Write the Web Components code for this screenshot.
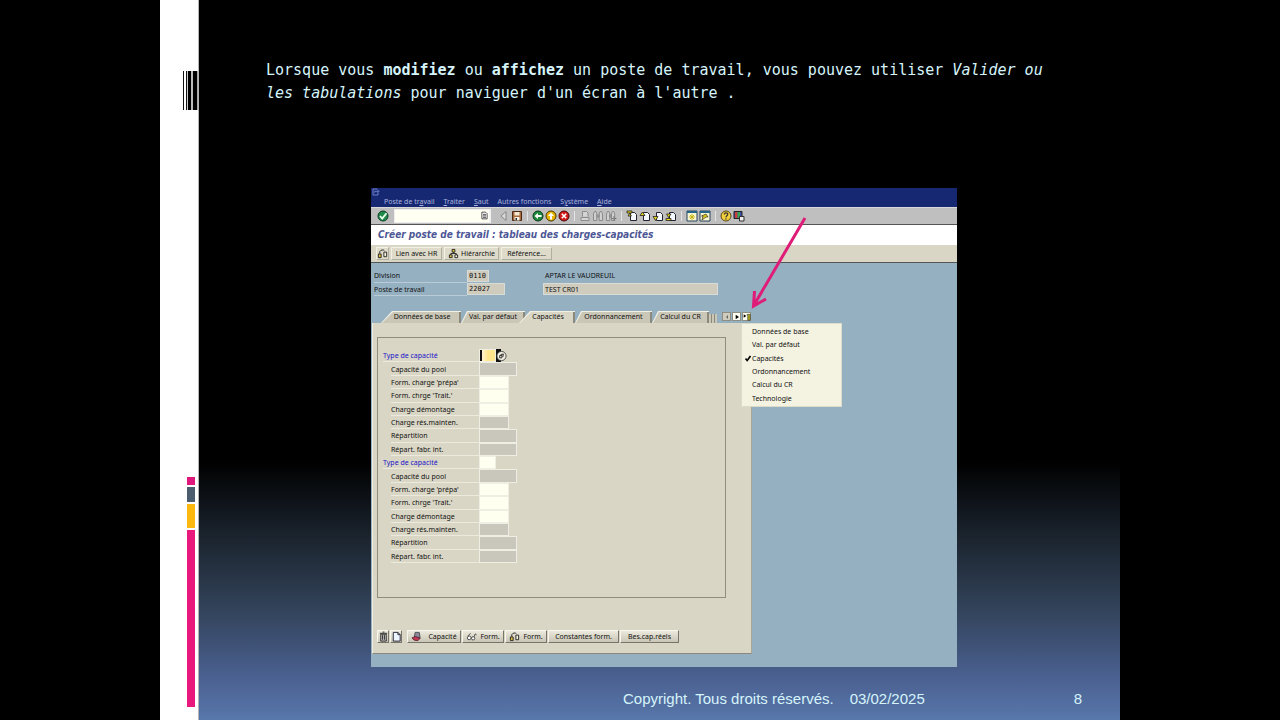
<!DOCTYPE html>
<html lang="fr">
<head>
<meta charset="utf-8">
<title>Poste de travail – navigation</title>
<style>
  html { background: #000; }
  body { margin: 0; min-height: 100vh; display: flex; justify-content: center; background: #000; }
</style>
</head>
<body>
<training-slide>
  <slide-title slot="title"></slide-title>
  <work-center></work-center>
  <span slot="notice">Copyright. Tous droits réservés.</span>
  <time slot="date" datetime="2025-02-03">03/02/2025</time>
  <span slot="page">8</span>
</training-slide>

<script>
const RESET = `
  *, *::before, *::after { box-sizing: border-box; }
  button, input { font: inherit; color: inherit; margin: 0; padding: 0; border: 0; border-radius: 0; outline: 0; background: none; }
  svg { display: block; }
`;

function define(name, css, markup) {
  customElements.define(name, class extends HTMLElement {
    constructor() {
      super();
      const html = typeof markup === 'function' ? markup(this) : markup;
      this.attachShadow({ mode: 'open' }).innerHTML = `<style>${RESET}${css}</style>${html}`;
    }
  });
}

/* Icon drawings on a 12 x 12 grid */
const disc = (fill, edge, mark) => `<circle cx="6" cy="6" r="5" fill="${fill}" stroke="${edge}"/>${mark}`;
const sheet = `<path d="M4.500 2.500h4l2 2v6h-6z" fill="#f4f8ff" stroke="#223"/>`;
const ICONS = {
  check: disc('#1f8a4a', '#0d3d22', '<path d="M3 6l2.200 2.600L9.500 3.200" fill="none" stroke="#e8fff0" stroke-width="1.800"/>'),
  prev: '<path d="M8 1.500v9L3 6z" fill="#d8d8d8" stroke="#777" stroke-width=".8"/>',
  save: '<path d="M1.500 1.500h9v9h-9z" fill="#a86a3c" stroke="#4a2a18"/><path d="M3.500 2h5v3.500h-5z" fill="#f4e6cf"/><path d="M3.500 7h5v3.500h-5z" fill="#f7f2e2"/><path d="M4.500 8h1.500v2.500H4.500z" fill="#333"/>',
  back: disc('#1d8b3c', '#0a3516', '<path d="M2.500 6L6 3v2h3.500v2H6v2z" fill="#fff"/>'),
  exit: disc('#e8b400', '#4a3600', '<path d="M6 2.500L9 6H7v3.500H5V6H3z" fill="#fff"/>'),
  cancel: disc('#d11a1a', '#4d0606', '<path d="M3.800 3.800l4.400 4.400M8.200 3.800L3.800 8.200" stroke="#fff" stroke-width="1.600"/>'),
  print: '<path d="M3.500 6.500v-5h4l1.500 1.500v3.500M2 7.500h8v3H2z" fill="#d4d4d4" stroke="#8c8c8c"/>',
  find: '<path d="M1.500 10.500V4l1-2.500H4l.8 2.500v6.500zM7.200 10.500V4L8 1.500h1.500l1 2.500v6.500zM5 5h2v2H5z" fill="#d0d0d0" stroke="#858585" stroke-width=".9"/>',
  findNext: '<path d="M1.500 10.500V4l1-2.500H4l.8 2.500v6.500zM6.500 10.500V4l.8-2.500h1.400l1 2.500v6.500zM4.500 5H6v2H4.500z" fill="#d0d0d0" stroke="#858585" stroke-width=".9"/><path d="M9 6v5M6.500 8.500h5" stroke="#777"/>',
  first: sheet + '<path d="M1 1h5v2H1zM2 6l1.500-2.500L5.500 6z" fill="#e9d51c" stroke="#222" stroke-width=".8"/>',
  up: sheet + '<path d="M1 5.500L3.500 2 6 5.500z" fill="#e9d51c" stroke="#222" stroke-width=".8"/>',
  down: sheet + '<path d="M1 6.500h5L3.500 10.500z" fill="#e9d51c" stroke="#222" stroke-width=".8"/>',
  last: sheet + '<path d="M1.500 4h4.500L3.500 7.500zM1 8.500h5v2H1z" fill="#e9d51c" stroke="#222" stroke-width=".8"/>',
  session: '<path d="M1 1h10v10H1z" fill="#f8f6d0" stroke="#26415e"/><path d="M1 1h10v2H1z" fill="#26658a"/><path d="M6 4v6M3 7h6M4 5l4 4M8 5l-4 4" stroke="#c0b010" stroke-width=".9"/>',
  shortcut: '<path d="M1 1h10v10H1z" fill="#f8f6d0" stroke="#26415e"/><path d="M1 1h10v2H1z" fill="#26658a"/><path d="M3 10l1-4h-1.500L7 4l2 3-2 0z" fill="#d8c916" stroke="#333" stroke-width=".7"/>',
  help: disc('#f2cf3c', '#5a4610', '<path d="M4.300 4.500c0-2.200 3.600-2 3.400 0C7.600 5.800 6 5.700 6 7.200M6 8.200v1.400" fill="none" stroke="#333" stroke-width="1.300"/>'),
  layout: '<path d="M1 1.500h8v7H1z" fill="#3a4fa8" stroke="#222"/><path d="M2 2h2.500v6H2z" fill="#d23b3b"/><path d="M4.500 2H7v6H4.500z" fill="#3ba352"/><path d="M6.500 6.500h4.500v4.500H6.500z" fill="#eee" stroke="#333"/>',
  exit2: '<path d="M8 1.500H1.500v9H9v-3M4 7V5h6M8 2.500L10.500 5 8 7.500" fill="none" stroke="#7c8bd0" stroke-width="1.300"/>',
  relation: '<path d="M3 6V4c1-2 4-2.500 5-1" fill="none" stroke="#222"/><path d="M1.500 6.500h3v4h-3z" fill="#e3c03a" stroke="#222"/><path d="M7.500 4.500h3v5h-3z" fill="#f5f2dc" stroke="#222"/>',
  tree: '<path d="M4.500 1.500h3v3h-3z" fill="#e3c03a" stroke="#222"/><path d="M6 4.500V6M3 8V6h6v2" fill="none" stroke="#222"/><path d="M1.500 7.500h3v3h-3z" fill="#e3c03a" stroke="#222"/><path d="M7.500 7.500h3v3h-3z" fill="#f5f2dc" stroke="#222"/>',
  trash: '<path d="M3 3.500h6v7.500H3z" fill="#c8c8c8" stroke="#222"/><path d="M2 2.500h8M5 1.200h2M5 4.500v5M7 4.500v5" stroke="#222"/>',
  page: '<path d="M2.500 1.500h5l2.500 2.500v7H2.500z" fill="#eef6ff" stroke="#223"/><path d="M7.500 1.500V4H10" fill="none" stroke="#223"/>',
  hat: '<path d="M3.500 7l1-5.500h4.500l1 6z" fill="#8b8a9c" stroke="#333" stroke-width=".8"/><path d="M1 7.500l4-1.500 5 2-2.500 2.500-4-.5z" fill="#c03a54" stroke="#4a1420" stroke-width=".8"/>',
  glasses: '<circle cx="3.500" cy="7.500" r="2" fill="#fff" stroke="#333" stroke-width=".9"/><circle cx="7.800" cy="8" r="1.800" fill="#fff" stroke="#333" stroke-width=".9"/><path d="M2 5.500L5 2.500M9 6.200l1-3 1.500 1" fill="none" stroke="#333" stroke-width=".9"/>',
  list: '<path d="M2.500 1.500h5l2 2v7h-7z" fill="#fff" stroke="#222"/><path d="M4 4.500h4M4 6.500h4M4 8.500h4" stroke="#222"/>',
  match: '<circle cx="6" cy="6" r="5" fill="#f1efe2" stroke="#444"/><path d="M5 4.500L8 3.800 7.500 7M4 5.500v2.500h2.500V5.500z" fill="none" stroke="#222"/>',
  arrowL: '<path d="M7.500 3v6L4.500 6z" fill="#666"/>',
  arrowR: '<path d="M4 2.500v7L9 6z" fill="#000"/>',
  tabList: '<path d="M1 2l4 2.500L1 7z" fill="#000"/><path d="M6 2h5v9H7V5z" fill="#a8a020" stroke="#333" stroke-width=".8"/>'
};

define('sap-icon',
  `:host { display: block; flex: none; width: 12px; height: 12px; } svg { width: 100%; height: 100%; }`,
  el => `<svg viewBox="0 0 12 12" aria-hidden="true">${ICONS[el.getAttribute('name')]}</svg>`);

/* Bare toolbar icon */
define('tool-button',
  `:host { display: block; flex: none; width: 13px; height: 13px; }
   button { display: grid; place-items: center; width: 100%; height: 100%; }`,
  el => `<button aria-label="${el.getAttribute('label')}"><sap-icon name="${el.getAttribute('icon')}"></sap-icon></button>`);

/* Raised button with optional icon */
define('sap-button',
  `:host { display: block; flex: none; }
   button { display: flex; align-items: center; justify-content: center; gap: var(--button-gap, 2px); width: 100%; height: 13px; line-height: 11px;
     white-space: nowrap; color: #111; border: 1px solid; border-color: #f3f2e6 #b0ae9f #b0ae9f #f3f2e6; background: #dedbcb; }
   :host([raised]) button { border-color: #f8f7ee #77756a #77756a #f8f7ee; background: linear-gradient(#ebe9dc, #c9c6b6); }
   sap-icon { width: 11px; height: 11px; }`,
  el => `<button${el.hasAttribute('label') ? ` aria-label="${el.getAttribute('label')}"` : ''}>${
    el.hasAttribute('icon') ? `<sap-icon name="${el.getAttribute('icon')}"></sap-icon>` : ''}<slot></slot></button>`);

define('sap-menu',
  `:host { display: block; height: 19px; background: #172873; color: #a9b3dc; }
   sap-icon { width: 10px; height: 8px; }
   nav { display: flex; gap: 9px; padding-left: 13px; line-height: 11px; }
   a { color: inherit; text-decoration: none; white-space: nowrap; }`,
  `<sap-icon name="exit2"></sap-icon>
   <nav><a href="#">Poste de tr<u>a</u>vail</a><a href="#"><u>T</u>raiter</a><a href="#"><u>S</u>aut</a><a href="#">Autres fonctions</a><a href="#">S<u>y</u>stème</a><a href="#"><u>A</u>ide</a></nav>`);

define('sap-toolbar',
  `:host { display: flex; align-items: center; height: 18px; padding: 0 0 1px 5px; background: #c0bfc0; border-bottom: 1px solid #555; border-top: 1px solid #d8d8d8; }
   .command { display: flex; align-items: center; width: 97px; height: 14px; margin: 0 6px 0 5px; background: #fffff2; border: 1px solid #eee; border-right: 2px solid #f2f2f2; }
   .command input { flex: 1; min-width: 0; height: 100%; }
   .command sap-icon { width: 9px; height: 9px; }
   .rule { flex: none; width: 8px; height: 10px; background: linear-gradient(90deg, transparent 4px, #e4e4e4 4px, #e4e4e4 5px, transparent 5px); }`,
  `<tool-button icon="check" label="Valider"></tool-button>
   <div class="command"><input aria-label="Commande"><sap-icon name="list"></sap-icon></div>
   <tool-button icon="prev" label="Replier"></tool-button><tool-button icon="save" label="Sauvegarder"></tool-button><i class="rule"></i>
   <tool-button icon="back" label="Retour"></tool-button><tool-button icon="exit" label="Terminer"></tool-button><tool-button icon="cancel" label="Interrompre"></tool-button><i class="rule"></i>
   <tool-button icon="print" label="Imprimer"></tool-button><tool-button icon="find" label="Rechercher"></tool-button><tool-button icon="findNext" label="Poursuivre la recherche"></tool-button><i class="rule"></i>
   <tool-button icon="first" label="Première page"></tool-button><tool-button icon="up" label="Page précédente"></tool-button><tool-button icon="down" label="Page suivante"></tool-button><tool-button icon="last" label="Dernière page"></tool-button><i class="rule"></i>
   <tool-button icon="session" label="Nouveau mode"></tool-button><tool-button icon="shortcut" label="Créer un raccourci"></tool-button><i class="rule"></i>
   <tool-button icon="help" label="Aide"></tool-button><tool-button icon="layout" label="Présentation"></tool-button>`);

/* Label with its entry field: head, wide, closed, tiny and focus variants */
define('sap-field',
  `:host { display: grid; grid-template-columns: 88px 1fr; padding-left: 8px; min-height: 0; }
   :host([head]) { grid-template-columns: 96px 1fr; padding-left: 0; }
   label { display: flex; align-items: center; padding-top: 1px; border-bottom: 1px solid #eceadd; line-height: 11px; white-space: nowrap; }
   :host([head]) label { color: #1a12c8; }
   .entry { display: flex; align-items: stretch; }
   input { width: 30px; height: 100%; border: 1px solid #efeee2; background: #fffff0; }
   :host([wide]) input { width: 38px; }
   :host([closed]) input { background: #c9c6bb; }
   :host([tiny]) input { width: 17px; }
   :host([focus]) input { background: linear-gradient(90deg, #111 2px, #fff3d0 2px, #ffe68c 8px); }
   .match { display: grid; place-items: center; width: 11px; background: linear-gradient(90deg, #111 5px, transparent 5px); }
   .match sap-icon { width: 11px; height: 12px; }`,
  el => `<label for="f">${el.getAttribute('label')}</label><div class="entry"><input id="f"${el.hasAttribute('closed') ? ' readonly' : ''}>${
    el.hasAttribute('focus') ? '<button class="match" aria-label="Aide à la saisie"><sap-icon name="match"></sap-icon></button>' : ''}</div>`);

define('sap-header',
  `:host { display: grid; grid-template-columns: 93px 76px 1fr; grid-auto-rows: 1fr; height: 27px; padding-left: 2px; margin-right: 239px; line-height: 11px; }
   label { border-bottom: 1px solid #b9cbd6; display: flex; align-items: center; padding-top: 1px; }
   input { height: 12px; padding-left: 1px; border: 1px solid #d9dcd6; background: #cfccbe; align-self: center; }
   .code { width: 22px; font-family: "DejaVu Sans Mono", monospace; }
   .long { width: 38px; }
   output { display: flex; align-items: center; padding-left: 2px; white-space: nowrap; }
   .name { width: 100%; }`,
  `<label for="div">Division</label><input id="div" class="code" value="0110" readonly><output for="div">APTAR LE VAUDREUIL</output>
   <label for="wc">Poste de travail</label><input id="wc" class="code long" value="22027" readonly><input class="name" aria-label="Désignation" value="TEST CR01" readonly>`);

/* Slanted tab */
define('sap-tab',
  `:host { display: block; height: 12px; }
   button { position: relative; width: 100%; height: 100%; line-height: 12px; white-space: nowrap; background: #f2f0e4; text-align: center; padding-left: var(--lead, 0);
     clip-path: polygon(var(--slant, 6px) 0, 100% 0, 100% 100%, 0 100%); }
   button::before { content: ""; position: absolute; inset: 1px 0 0 1px; background: #cac7b7; border-right: 2px solid #8b897c;
     clip-path: polygon(var(--slant, 6px) 0, 100% 0, 100% 100%, 0 100%); }
   :host([current]) button::before { background: #d9d6c5; }
   span { position: relative; }`,
  `<button><span><slot></slot></span></button>`);

define('tab-strip',
  `:host { display: flex; align-items: end; padding-left: 9px; height: 12px; }
   .tabs { display: grid; grid-template-columns: 80px 58px 56px 77px 57px; }
   sap-tab[current] { z-index: 1; }
   sap-tab:nth-child(2) { margin-right: -6px; }
   sap-tab:first-child, sap-tab[current] { --slant: 11px; --lead: 2px; }
   .more { width: 8px; height: 9px; background: repeating-linear-gradient(90deg, #cac7b7 0 2px, #8b897c 2px 3px); }
   .arrows { display: flex; gap: 1px; margin-left: 5px; height: 11px; }
   .arrows button { display: grid; place-items: center; width: 9px; height: 9px; border: 1px solid #8d8d80; background: #fffff4; }
   .arrows button:first-child { background: #cfccbe; }
   .arrows sap-icon { width: 8px; height: 8px; }`,
  `<div class="tabs"><sap-tab>Données de base</sap-tab><sap-tab>Val. par défaut</sap-tab><sap-tab current>Capacités</sap-tab><sap-tab>Ordonnancement</sap-tab><sap-tab>Calcul du CR</sap-tab></div>
   <i class="more"></i>
   <div class="arrows"><button aria-label="Onglet précédent"><sap-icon name="arrowL"></sap-icon></button><button aria-label="Onglet suivant"><sap-icon name="arrowR"></sap-icon></button><button aria-label="Liste des onglets"><sap-icon name="tabList"></sap-icon></button></div>`);

define('tab-menu',
  `:host { display: grid; grid-auto-rows: 1fr; width: 101px; height: 84px; padding: 1px 0; background: #f4f3e2; border: 1px solid #dddccb; }
   button { display: flex; align-items: center; text-align: left; line-height: 11px; padding-left: 10px; white-space: nowrap; }
   button[aria-checked=true] { padding-left: 3px; gap: 1px; }
   svg { width: 6px; height: 7px; }`,
  `<button>Données de base</button><button>Val. par défaut</button>
   <button role="menuitemradio" aria-checked="true"><svg viewBox="0 0 6 7" aria-hidden="true"><path d="M.5 3.500L2.200 5.500 5.500 1" fill="none" stroke="#000" stroke-width="1.600"/></svg>Capacités</button>
   <button>Ordonnancement</button><button>Calcul du CR</button><button>Technologie</button>`);

const capacityRows = head => `${head}
  <sap-field closed wide label="Capacité du pool"></sap-field>
  <sap-field label="Form. charge 'prépa'"></sap-field>
  <sap-field label="Form. chrge 'Trait.'"></sap-field>
  <sap-field label="Charge démontage"></sap-field>
  <sap-field closed label="Charge rés.mainten."></sap-field>
  <sap-field closed wide label="Répartition"></sap-field>
  <sap-field closed wide label="Répart. fabr. int."></sap-field>`;

define('capacity-panel',
  `:host { display: block; padding: 14px 25px 10px 4px; background: #d9d6c5; border: 1px solid #eeede0; border-width: 0 1px 1px 1px; border-bottom-color: #8b897c; border-right-color: #a9a798; }
   .group { height: 261px; padding: 11px 5px; border: 1px solid #8f8d80; }
   .rows { display: grid; grid-auto-rows: 1fr; height: 214px; }
   .actions { display: flex; gap: 1px; margin-top: 32px; --button-gap: 6px; }
   .square { width: 12px; }
   .w54 { width: 54px; margin-left: 4px; }
   .w42 { width: 42px; --button-gap: 3px; }
   .w70 { width: 71px; }
   .w58 { width: 59px; }`,
  `<div class="group"><div class="rows">
     ${capacityRows('<sap-field head focus tiny label="Type de capacité"></sap-field>')}
     ${capacityRows('<sap-field head tiny label="Type de capacité"></sap-field>')}
   </div></div>
   <div class="actions">
     <sap-button raised class="square" icon="trash" label="Supprimer"></sap-button><sap-button raised class="square" icon="page" label="Créer"></sap-button>
     <sap-button raised class="w54" icon="hat">Capacité</sap-button><sap-button raised class="w42" icon="glasses">Form.</sap-button><sap-button raised class="w42" icon="relation">Form.</sap-button>
     <sap-button raised class="w70">Constantes form.</sap-button><sap-button raised class="w58">Bes.cap.réels</sap-button>
   </div>`);

define('work-center',
  `:host { display: block; position: relative; background: #95b0c1; color: #111; font: 7px/11px "Noto Sans", sans-serif; }
   h2 { margin: 0; height: 20px; padding-left: 7px; background: #fff; color: #4d5796; font: italic bold 10px/20px "DejaVu Sans Condensed", "DejaVu Sans", sans-serif; white-space: nowrap; }
   .functions { display: flex; align-items: center; gap: 2px; height: 18px; padding-left: 5px; background: #d9d6c5; border-bottom: 1px solid #555; }
   .w13 { width: 13px; } .w50 { width: 51px; } .w54 { width: 55px; }
   .body { padding: 6px 0 13px 1px; }
   tab-strip { margin-top: 15px; }
   .sheet { width: 380px; position: relative; }
   tab-menu { position: absolute; left: 369px; top: 12px; z-index: 2; }
   .pointer { position: absolute; left: 378px; top: 26px; width: 62px; height: 96px; z-index: 3; }`,
  `<sap-menu></sap-menu>
   <sap-toolbar></sap-toolbar>
   <h2>Créer poste de travail : tableau des charges-capacités</h2>
   <div class="functions"><sap-button class="w13" icon="relation" label="Relations"></sap-button><sap-button class="w50">Lien avec HR</sap-button><sap-button class="w54" icon="tree">Hiérarchie</sap-button><sap-button class="w50">Référence...</sap-button></div>
   <div class="body">
     <sap-header></sap-header>
     <div class="sheet"><tab-strip></tab-strip><capacity-panel></capacity-panel><tab-menu></tab-menu></div>
   </div>
   <svg class="pointer" viewBox="0 0 62 96" aria-hidden="true"><path d="M56 4L5 91M5.500 77L4.500 92L17 85" fill="none" stroke="#df1c78" stroke-width="3"/></svg>`);

define('slide-rail',
  `:host { display: flex; flex-direction: column; align-items: flex-end; flex: none; width: 39px; background: #fff; border-right: 1px solid #b5b5b5; }
   .code { width: 15px; height: 39px; margin-top: 71px; background: linear-gradient(90deg, #111 0 1px, #fff 1px 3px, #111 3px 4px, #ccc 4px 5px, #000 5px 8px, #bbb 8px 10px, #000 10px 14px, #aaa 14px); }
   .marks { display: grid; gap: 2px; width: 8px; margin: auto 3px 13px 0; }
   .marks i:nth-child(1) { height: 8px; background: #e0187b; }
   .marks i:nth-child(2) { height: 15px; background: #4d5d70; }
   .marks i:nth-child(3) { height: 24px; background: #fbb80f; }
   .marks i:nth-child(4) { height: 177px; background: #e8187c; }`,
  `<div class="code"></div><div class="marks"><i></i><i></i><i></i><i></i></div>`);

define('slide-title',
  `:host { display: block; }
   h1 { margin: 0; font: 15px/23px "DejaVu Sans Mono", monospace; }`,
  `<h1>Lorsque vous <b>modifiez</b> ou <b>affichez</b> un poste de travail, vous pouvez utiliser <i>Valider ou</i> <i>les tabulations</i> pour naviguer d'un écran à l'autre .</h1>`);

define('training-slide',
  `:host { display: flex; width: 75%; min-height: 100vh; color: #d6f4fb; }
   main { flex: 1; min-width: 0; display: flex; flex-direction: column; background: linear-gradient(#000 64%, #1c2530 75%, #33445c 85%, #4a6090 94%, #5877ab 100%); }
   header { margin: 59px 50px 0 67px; }
   .shot { margin: 83px 163px 0 172px; }
   footer { display: flex; gap: 16px; margin-top: auto; padding: 0 38px 12px 424px; font: 15px/18px "Liberation Sans", sans-serif; white-space: nowrap; }
   .page { margin-left: auto; }`,
  `<slide-rail></slide-rail>
   <main>
     <header><slot name="title"></slot></header>
     <div class="shot"><slot></slot></div>
     <footer><slot name="notice"></slot><slot name="date"></slot><span class="page"><slot name="page"></slot></span></footer>
   </main>`);
</script>
</body>
</html>
